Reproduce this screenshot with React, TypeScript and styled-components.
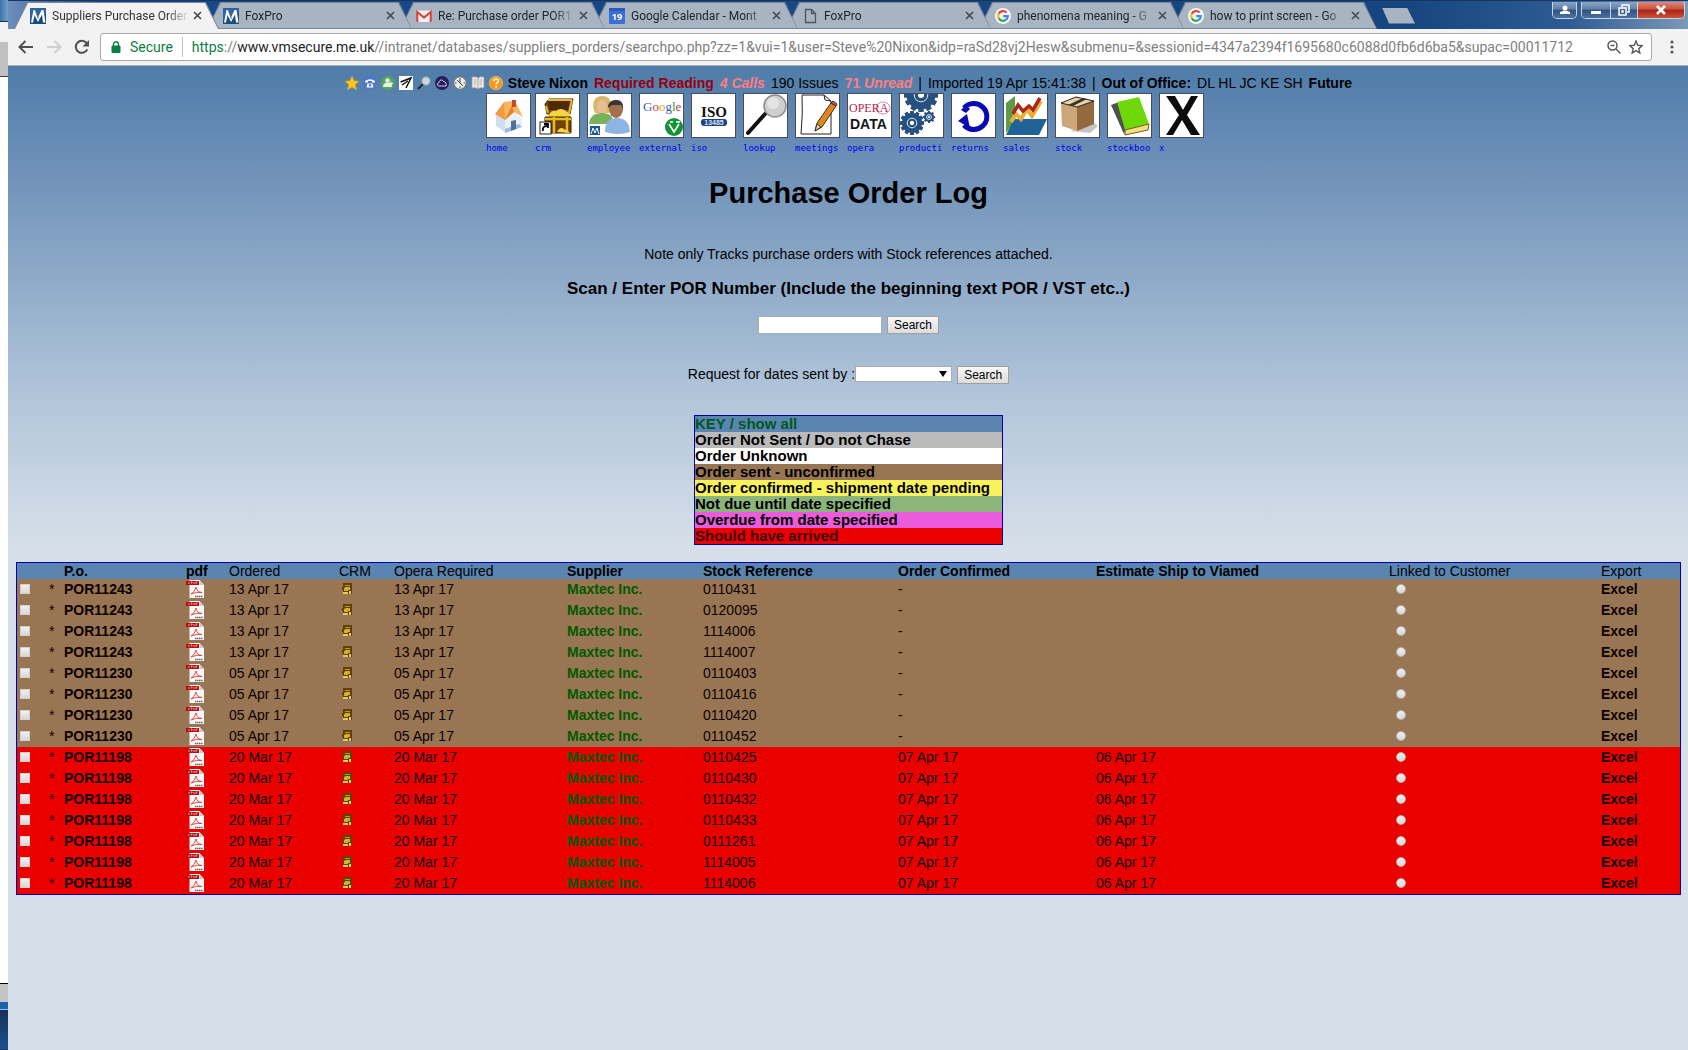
import React from 'react';
import styled, { createGlobalStyle, css } from 'styled-components';

const GlobalStyle = createGlobalStyle`
  *, *::before, *::after { box-sizing: border-box; }
  body {
    margin: 0;
    background: #d6dfe9;
    font-family: "Liberation Sans", Arial, sans-serif;
    font-size: 14px;
    color: #000;
  }
  a { color: inherit; text-decoration: none; }
  svg { display: block; }
`;

const uiFont = css`font-family: Roboto, "Noto Sans", sans-serif;`;

/* ---------- desktop and window frame ---------- */

const Desktop = styled.div`
  display: grid;
  grid-template-columns: 8px minmax(0, 1fr);
  min-height: 100vh;
`;

const Behind = styled.div`
  display: flex;
  flex-direction: column;
  background: #fff;
`;

const Strip = styled.div<{ $h: number; $bg: string; $line?: string }>`
  height: ${(p) => p.$h}px;
  background: ${(p) => p.$bg};
  border-bottom: 1px solid ${(p) => p.$line ?? 'transparent'};
`;

const Grow = styled.div`flex: 1;`;

const Browser = styled.div`
  display: flex;
  flex-direction: column;
  min-width: 0;
`;

/* ---------- tab strip ---------- */

const TabStrip = styled.div`
  display: flex;
  height: 29px;
  padding: 1px 3px 0 6px;
  background: linear-gradient(90deg, #6d8dbd 0, #17498a 90px, #17457f 1400px, #2d5b92 1560px, #7c98b8 100%);
  border-top: 1px solid #16355f;
`;

const Tabs = styled.div`
  display: flex;
  flex: 0 1 1364px;
  min-width: 0;
  isolation: isolate;
`;

const Tab = styled.div<{ $active?: boolean; $z: number }>`
  ${uiFont}
  position: relative;
  z-index: ${(p) => p.$z};
  display: flex;
  align-items: center;
  gap: 6px;
  flex: 0 1 205px;
  min-width: 0;
  height: 27px;
  padding: 0 15px 0 16px;
  font-size: 12px;
  color: ${(p) => (p.$active ? '#333' : '#20242b')};
  background: #7b8796;
  clip-path: polygon(13px 0, calc(100% - 13px) 0, 100% 100%, 0 100%);
  & + & { margin-left: -12px; }
  &::before {
    content: '';
    position: absolute;
    z-index: -1;
    inset: ${(p) => (p.$active ? '1px 1px 0' : '1px')};
    background: ${(p) => (p.$active ? '#f2f2f2' : '#a9b4c3')};
    clip-path: polygon(13px 0, calc(100% - 13px) 0, 100% 100%, 0 100%);
  }
`;

const TabTitle = styled.span`
  flex: 1;
  min-width: 0;
  margin-right: -5px;
  overflow: hidden;
  white-space: nowrap;
  line-height: 18px;
  mask-image: linear-gradient(90deg, #000 calc(100% - 22px), transparent);
`;

const PlainButton = styled.button`
  display: flex;
  align-items: center;
  justify-content: center;
  flex: none;
  padding: 0;
  border: 0;
  background: none;
  color: inherit;
`;

const TabClose = styled(PlainButton)`
  width: 14px;
  height: 14px;
  color: #454b54;
`;

const NewTab = styled(PlainButton)`
  align-self: center;
  width: 33px;
  height: 16px;
  margin-left: 4px;
  background: #a9b4c3;
  clip-path: polygon(0 0, 25px 0, 100% 100%, 7px 100%);
`;

const WindowControls = styled.div`
  display: flex;
  align-items: flex-start;
  gap: 4px;
  margin-left: auto;
`;

const ControlGroup = styled.div`
  display: flex;
  height: 17px;
  overflow: hidden;
  border: 1px solid #c5d3e4;
  border-top: 0;
  border-radius: 0 0 5px 5px;
`;

const ControlButton = styled(PlainButton)<{ $w: number; $close?: boolean }>`
  width: ${(p) => p.$w}px;
  height: 16px;
  background: ${(p) =>
    p.$close
      ? 'linear-gradient(#d98b7c, #c8503c 45%, #ab2311 50%, #c8523a)'
      : 'linear-gradient(#8da5c4, #5f7fa8 45%, #30527f 50%, #4d719c)'};
  & + & { border-left: 1px solid #c5d3e4; }
`;

/* ---------- toolbar ---------- */

const Toolbar = styled.div`
  ${uiFont}
  display: flex;
  align-items: center;
  height: 37px;
  padding: 0 8px;
  background: #f2f2f2;
  border-bottom: 1px solid #a9b0b8;
`;

const NavButton = styled(PlainButton)<{ $dim?: boolean }>`
  width: 20px;
  height: 20px;
  margin-right: 8px;
  color: ${(p) => (p.$dim ? '#cfcfcf' : '#505050')};
`;

const AddressBar = styled.div`
  display: flex;
  align-items: center;
  flex: 1;
  min-width: 0;
  height: 28px;
  padding: 0 7px 0 10px;
  background: #fff;
  border: 1px solid #a8a8a8;
  border-radius: 3px;
  font-size: 14px;
  line-height: 20px;
`;

const Secure = styled.span`
  margin-left: 9px;
  padding-right: 9px;
  color: #0b8043;
  border-right: 1px solid #c0c0c0;
`;

const Url = styled.div`
  flex: 1;
  min-width: 0;
  margin-left: 9px;
  overflow: hidden;
  white-space: nowrap;
  color: #808080;
  b { font-weight: 400; color: #222; }
  i { font-style: normal; color: #0b8043; }
`;

const BarButton = styled(PlainButton)`
  width: 16px;
  height: 20px;
  margin-left: 6px;
  color: #5a5a5a;
`;

const MoreButton = styled(BarButton)`margin-left: 12px;`;

/* ---------- page ---------- */

const Page = styled.main`
  display: flex;
  flex-direction: column;
  align-items: center;
  flex: 1;
  padding: 8px 7px 24px 8px;
  background: #d6dfe9 linear-gradient(#4f7ca9 0, #6c8fb7 94px, #b0c4d9 325px, #d6dfe9 480px) no-repeat;
`;

const StatusBar = styled.div`
  display: flex;
  align-items: center;
  gap: 4px;
  font-size: 14px;
  line-height: 18px;
  white-space: nowrap;
`;

const Quick = styled.a`
  display: block;
  width: 14px;
  height: 14px;
`;

const StatusText = styled.div`
  display: flex;
  gap: 6px;
  margin-left: 1px;
`;
const Required = styled.a`font-weight: 700; color: #96000e;`;
const Alert = styled.a`font-weight: 700; color: #ff7d80;`;

const Menu = styled.nav`
  display: flex;
  margin-top: 1px;
`;

const MenuItem = styled.a<{ $w: number }>`
  display: flex;
  flex-direction: column;
  width: ${(p) => p.$w}px;
  font-family: "DejaVu Sans Mono", "Liberation Mono", monospace;
  font-size: 9px;
  line-height: 12px;
  color: #0000f0;
`;

const MenuPicture = styled.span`
  display: block;
  width: 45px;
  height: 45px;
  margin-bottom: 4px;
  background: #fff;
  border: 1px solid #4c4c58;
`;

const Title = styled.h1`
  margin: 22px 0 35px;
  font-size: 29px;
  line-height: 34px;
`;

const Note = styled.p`
  margin: 0;
  line-height: 18px;
`;

const Prompt = styled.label`
  margin: 16px 0 17px;
  font-size: 17px;
  font-weight: 700;
  line-height: 20px;
`;

const SearchForm = styled.form<{ $gap: number }>`
  display: flex;
  align-items: flex-start;
  line-height: 16px;
  margin: 0 0 ${(p) => p.$gap}px;
`;

const TextBox = styled.input`
  width: 124px;
  height: 18px;
  padding: 0 2px;
  background: #fff;
  border: 1px solid #a5adb5;
`;

const SearchButton = styled.button`
  height: 18px;
  margin-left: 5px;
  padding: 0 6px;
  font-family: inherit;
  font-size: 12px;
  line-height: 16px;
  color: #000;
  background: linear-gradient(#f8f8f8, #dcdcdc);
  border: 1px solid #a0a0a0;
`;

const SelectBox = styled.span`
  position: relative;
  display: block;
  width: 97px;
  height: 16px;
  &::after {
    content: '';
    position: absolute;
    top: 5px;
    right: 5px;
    border: solid transparent;
    border-width: 6px 4px 0;
    border-top-color: #000;
    pointer-events: none;
  }
`;

const Select = styled.select`
  display: block;
  width: 100%;
  height: 100%;
  appearance: none;
  background: #fff;
  border: 1px solid #a5adb5;
`;

const Key = styled.ul`
  width: 309px;
  margin: 0 0 17px;
  padding: 0;
  list-style: none;
  border: 1px solid #0000a8;
`;

const KeyRow = styled.li<{ $bg: string; $fg?: string }>`
  font-size: 15px;
  font-weight: 700;
  line-height: 16px;
  color: ${(p) => p.$fg ?? '#000'};
  background: ${(p) => p.$bg};
`;

const Orders = styled.table`
  width: 100%;
  table-layout: fixed;
  border-collapse: separate;
  border-spacing: 0;
  border: 1px solid #0000a8;
`;

const Head = styled.th<{ $bold?: boolean }>`
  height: 16px;
  padding: 0;
  text-align: left;
  font-weight: ${(p) => (p.$bold ? 700 : 400)};
  line-height: 16px;
  white-space: nowrap;
  background: #5a85b0;
`;

const Row = styled.tr<{ $late: boolean }>`
  background: ${(p) => (p.$late ? '#eb0000' : '#997653')};
`;

const Cell = styled.td<{ $bold?: boolean; $green?: boolean }>`
  height: 21px;
  padding: 0 0 2px;
  line-height: 18px;
  white-space: nowrap;
  font-weight: ${(p) => (p.$bold ? 700 : 400)};
  color: ${(p) => (p.$green ? '#005a00' : '#0d0000')};
`;

const Tick = styled.input`
  display: block;
  appearance: none;
  width: 10px;
  height: 10px;
  margin: 0 3px;
  background: linear-gradient(#f0f0f0, #d8d8d8);
  border: 1px solid #d4cfc8;
`;

const Dot = styled(Tick)`
  margin: 0 7px;
  border-radius: 50%;
  border-color: #b9b3ac;
`;

const Indent = styled.span`
  display: block;
  padding-left: 3px;
`;

/* ---------- drawings ---------- */

const Cross = () => (
  <svg width="9" height="9" viewBox="0 0 9 9" stroke="currentColor" strokeWidth="1.7"><path d="M1 1l7 7M8 1L1 8" /></svg>
);

const ViamedIcon = () => (
  <svg width="16" height="16" viewBox="0 0 16 16">
    <rect width="16" height="16" fill="#1c4b82" />
    <path d="M0 0h16v5L0 12z" fill="#2d639f" />
    <path d="M1 14.500h2L4.500 7 8 14l4-7.500 1 8h2.500L13.500 2h-2L8 9.500 5.500 2h-2z" fill="#fff" />
    <path d="M5 2l3.500 9" stroke="#1c4b82" strokeWidth=".7" />
  </svg>
);

const GmailIcon = () => (
  <svg width="16" height="16" viewBox="0 0 16 16">
    <rect y="2.500" width="16" height="11.500" rx="1" fill="#eee" />
    <path d="M1.200 14V4L8 9.500 14.800 4v10" fill="none" stroke="#d04a42" strokeWidth="2.200" />
  </svg>
);

const CalendarIcon = () => (
  <svg width="16" height="16" viewBox="0 0 16 16">
    <rect width="16" height="16" rx="1" fill="#3b6fd4" />
    <rect width="16" height="3" fill="#2f5bb5" />
    <text x="8" y="12" textAnchor="middle" fontSize="9" fontWeight="700" fontFamily="Open Sans, sans-serif" fill="#fff">19</text>
  </svg>
);

const FileIcon = () => (
  <svg width="16" height="16" viewBox="0 0 16 16" fill="none" stroke="#50555c" strokeWidth="1.300">
    <path d="M3.500 1.500h6l4 4v9h-10zM9.500 1.500v4h4" />
  </svg>
);

const GoogleIcon = () => (
  <svg width="16" height="16" viewBox="0 0 16 16" fill="none" strokeWidth="2.200">
    <circle cx="8" cy="8" r="8" fill="#f4f6f8" />
    <path d="M11.600 4.600A4.800 4.800 0 0 0 3.700 5.800" stroke="#ea4335" />
    <path d="M3.700 5.800a4.800 4.800 0 0 0 0 4.400" stroke="#fbbc05" />
    <path d="M3.700 10.200a4.800 4.800 0 0 0 7.300 1.500" stroke="#34a853" />
    <path d="M11 11.700A4.800 4.800 0 0 0 12.800 8.200H8.200" stroke="#4285f4" />
  </svg>
);

const ArrowIcon = ({ flip }: { flip?: boolean }) => (
  <svg width="16" height="16" viewBox="0 0 16 16" fill="none" stroke="currentColor" strokeWidth="2">
    <path d={flip ? 'M1 8h13M8.500 2l6 6-6 6' : 'M15 8H2M7.500 2l-6 6 6 6'} />
  </svg>
);

const ReloadIcon = () => (
  <svg width="16" height="16" viewBox="0 0 16 16">
    <path d="M13.300 10.300A6 6 0 1 1 12.500 4" fill="none" stroke="currentColor" strokeWidth="2" />
    <path d="M15 1v6.500H8.500z" fill="currentColor" />
  </svg>
);

const LockIcon = () => (
  <svg width="10" height="12" viewBox="0 0 10 12">
    <rect x="0.500" y="4.500" width="9" height="7.500" rx="1" fill="#0b8043" />
    <path d="M2.500 5V3.200a2.500 2.500 0 0 1 5 0V5" fill="none" stroke="#0b8043" strokeWidth="1.400" />
  </svg>
);

const quickIcons: [string, React.ReactNode][] = [
  ['Favourites', <path key="i" d="M7 0l2 4.800 5 .4-3.800 3.400L11.500 14 7 11 2.500 14l1.300-5.400L0 5.200l5-.4z" fill="#ffc61e" stroke="#e89a10" strokeWidth=".5" />],
  ['Phone', <g key="i"><circle cx="7" cy="7" r="7" fill="#4f74cf" /><path d="M2 6.500V5Q7 1.500 12 5v1.500H9V5H5v1.500zM3.500 11.500l1-4h5l1 4z" fill="#fff" /><circle cx="7" cy="9.300" r="1.200" fill="#4f74cf" /></g>],
  ['Contacts', <g key="i"><circle cx="7" cy="7" r="7" fill="#57a55c" /><circle cx="6.500" cy="4.500" r="2.200" fill="#e6f3e4" /><path d="M2 11q0-4.500 4.500-4.500T11 11z" fill="#e6f3e4" /><path d="M10 5.500v4M8 7.500h4" stroke="#fff" /></g>],
  ['Pen', <g key="i"><rect width="14" height="14" fill="#fff" /><path d="M1.500 6L12 2 7 12M3 9l6-4" fill="none" stroke="#111" strokeWidth="1.500" /></g>],
  ['Find', <g key="i"><path d="M1 13l5-5" stroke="#222" strokeWidth="1.800" /><circle cx="9" cy="5" r="4.200" fill="#c9d8dc" stroke="#8b9ba0" /></g>],
  ['Cloud', <g key="i"><circle cx="7" cy="7" r="7" fill="#241e5c" /><path d="M3.500 10q-2-1-.5-3 1 0 1-1 2-4 4.500-.5Q12 6 11 10z" fill="none" stroke="#d3d2ea" /></g>],
  ['Clock', <g key="i"><circle cx="7" cy="7" r="6.300" fill="#eee" stroke="#777" strokeWidth="1.300" /><path d="M7 2v5l3 3M2 7h1.500M10.500 7H12M7 12v-1.500M7 7L4 4" fill="none" stroke="#444" /></g>],
  ['Book', <g key="i"><path d="M1 1q4-1 6 1 2-2 6-1v11q-4-1-6 1-2-2-6-1z" fill="#e9e9e4" stroke="#999" strokeWidth=".7" /><path d="M7 2v11M3 4h2.500M3 6h2.500M3 8h2.500M8.500 4H11M8.500 6H11M8.500 8H11" stroke="#999" strokeWidth=".7" /></g>],
  ['Help', <g key="i"><circle cx="7" cy="7" r="6.700" fill="#f7981d" stroke="#ffc467" strokeWidth=".7" /><path d="M4.800 5.200q.2-2.200 2.300-2.200t2.200 2q0 1.200-1.300 1.900-.9.600-.9 1.700M7.100 10v1.700" fill="none" stroke="#fff" strokeWidth="1.500" /></g>],
];

const Gear = ({ x, y, r, teeth }: { x: number; y: number; r: number; teeth: number }) => (
  <g transform={`translate(${x} ${y})`}>
    {Array.from({ length: teeth }, (_, i) => (
      <rect key={i} x={-r / 7} y={-r} width={r / 3.5} height={r * 2} fill="#26507f" transform={`rotate(${(i * 360) / teeth})`} />
    ))}
    <circle r={r * 0.85} fill="#26507f" />
    <circle r={r * 0.4} fill="none" stroke="#dbe6f0" strokeWidth="1" />
    <circle r={r * 0.18} fill="#fff" />
  </g>
);

const menuItems: [string, React.ReactNode][] = [
  ['home', <g key="i"><path d="M9 20l9 6v12L9 32z" fill="#cfdff0" /><path d="M18 25l8-7 9 6v9l-17 6z" fill="#eaf1fa" /><path d="M18 39l17-6-3-3-14 5z" fill="#9cbbe3" /><path d="M8 20L17 8l11-1-10 19z" fill="#f29a3e" /><path d="M17 8l11-1 8 16-9-5-9 8z" fill="#f8b566" /><path d="M27 18l-9 8 7-15z" fill="#e88425" /><rect x="25" y="6" width="4" height="7" fill="#c8452e" /><path d="M24 27l5-1v9l-5 2z" fill="#4f7099" /></g>],
  ['crm', <g key="i"><path d="M9 10l4-5h24l-3 15H11z" fill="#7a4a10" stroke="#3a2205" /><path d="M12 7h22l-2 9H13z" fill="#4c2c08" /><path d="M10 12l2 7M36 6l-3 13M12 6h24" stroke="#e7bb2c" strokeWidth="2" /><path d="M12 22q3-6 8-5 5-5 14 3v6H12z" fill="#f6d442" /><path d="M9 23h26v16H9z" fill="#6d430c" stroke="#3a2205" /><path d="M9 25h26M18 23v16M31 23v16" stroke="#e9bb23" strokeWidth="2.500" /><path d="M21 38q3-6 7-3l7 4z" fill="#f6d442" /><rect x="4" y="28" width="11" height="12" fill="#fff" stroke="#222" /><path d="M7 37q-1-5 4-5M8 30h4v4" fill="none" stroke="#000" strokeWidth="1.800" /></g>],
  ['employee', <g key="i"><path d="M5 13Q5 2 14 2t9 9l-2 8H7z" fill="#d8b76b" /><ellipse cx="14" cy="13" rx="5" ry="7" fill="#e9bd93" /><path d="M1 30q1-11 13-11t11 11z" fill="#7bb15a" /><ellipse cx="28" cy="15" rx="7" ry="9" fill="#a2704d" /><path d="M20 14q0-8 8-8t7 9l-2-4h-9z" fill="#3c3534" /><path d="M17 38q0-14 12-14 12 0 13 14-12 4-25 0z" fill="#8db4e2" /><rect x="2" y="32" width="10" height="9" fill="#1d5a94" /><path d="M3 40l2-6 2 5 2-5 2 6" fill="none" stroke="#fff" /></g>],
  ['external', <g key="i"><text x="3" y="17" fontFamily="Liberation Serif, serif" fontSize="13" fill="#3a62b8">G<tspan fill="#cc3b35">o</tspan><tspan fill="#dca51e">o</tspan><tspan>g</tspan><tspan fill="#3c9a48">l</tspan><tspan fill="#cc3b35">e</tspan></text><circle cx="34" cy="33" r="9" fill="#149239" /><path d="M29 30l5 8 5-8M30 28h3M36 28h4" fill="none" stroke="#fff" strokeWidth="1.600" /></g>],
  ['iso', <g key="i"><text x="22" y="23" textAnchor="middle" fontFamily="Liberation Serif, serif" fontSize="15" fontWeight="700" fill="#111">ISO</text><rect x="9" y="25" width="26" height="7" rx="3" fill="#1f4580" /><text x="22" y="31" textAnchor="middle" fontFamily="Liberation Sans, sans-serif" fontSize="7" fontWeight="700" fill="#d7e3f4">13485</text></g>],
  ['lookup', <g key="i"><path d="M4 39l17-19" stroke="#111" strokeWidth="4" strokeLinecap="round" /><circle cx="31" cy="12" r="11" fill="#cfcfcf" stroke="#8e8e8e" strokeWidth="1.500" /><circle cx="29" cy="9" r="6" fill="#e4e4e4" /></g>],
  ['meetings', <g key="i"><path d="M6 1h22l7 6v33H5q2-20 1-39z" fill="#fff" stroke="#222" /><path d="M28 1l1 5 6 1" fill="none" stroke="#222" /><path d="M19 37l2-8L35 9l5 3-14 21z" fill="#dd8626" stroke="#4a2a10" /><path d="M35 9l2-2 4 3-1 2z" fill="#c94b76" stroke="#4a2a10" /><path d="M19 37l2-7 4 3z" fill="#f4d4a1" stroke="#333" /></g>],
  ['opera', <g key="i"><ellipse cx="35" cy="14" rx="7" ry="6" fill="none" stroke="#d88ba0" /><text x="1" y="18" fontFamily="Liberation Serif, serif" fontSize="12" fill="#b8234a">OPERA</text><text x="2" y="35" fontFamily="Liberation Sans, sans-serif" fontSize="14" fontWeight="700" fill="#151515">DATA</text></g>],
  ['producti', <g key="i"><Gear x={21} y={1} r={17} teeth={12} /><Gear x={12} y={29} r={12} teeth={12} /><Gear x={29} y={23} r={6} teeth={8} /></g>],
  ['returns', <g key="i"><path d="M12 14A13 13 0 1 1 12 31" fill="none" stroke="#0808b4" strokeWidth="5" /><path d="M6 27l9-7 3 14z" fill="#0808b4" /><path d="M9 16l5-5 4 4-4 4z" fill="#0808b4" /></g>],
  ['sales', <g key="i"><path d="M2 9l9-7v25L2 39z" fill="#5d9b4b" /><path d="M10 25h33l-8 16H2z" fill="#1f6298" /><path d="M7 28l5-8 5 5 6-10 5 7 9-15" fill="none" stroke="#e7b036" strokeWidth="4" /><path d="M9 20l5-9 5 6 6-5 4 4 7-12" fill="none" stroke="#ad2818" strokeWidth="3.500" /></g>],
  ['stock', <g key="i"><path d="M14 37l20 2 8-7-5-4z" fill="#c5c5c5" /><path d="M5 9l16 4v24L6 32z" fill="#cda77a" /><path d="M21 13l17-6v23l-17 7z" fill="#94693e" /><path d="M5 9l15-6 18 4-17 6z" fill="#ead0a6" stroke="#222" /><path d="M12 11l15-7 4 1-14 7z" fill="#3b342c" /></g>],
  ['stockboo', <g key="i"><path d="M3 11l8-3 7 26-2 6z" fill="#505050" /><path d="M9 8l22-5 10 27-24 6z" fill="#6fd80a" /><path d="M17 36l24-6-1 6-23 5z" fill="#f5df83" stroke="#6b5f1a" /></g>],
  ['x', <path key="i" d="M6 2h9l8 14 8-14h7L27 21l13 20h-9l-9-15-9 15H6l13-20z" fill="#0b0b0b" />],
];

const PdfIcon = () => (
  <svg width="18" height="18" viewBox="0 0 18 18">
    <path d="M3.500 0h10l4.500 5v13H3.500z" fill="#f7f7f7" />
    <path d="M13.500 0l4.500 5h-4.500z" fill="#c9c9c9" />
    <rect y="1" width="13" height="4" fill="#b80d12" />
    <path d="M3 2v2M5 2h1v1H5M8 2v2M10 4V2h1.500" fill="none" stroke="#f6c7c7" strokeWidth=".8" />
    <path d="M5 14q4-2 5-7 .5 5 6 5.500-6-1-11 1.500z" fill="none" stroke="#d8423c" strokeWidth=".9" />
    <path d="M9 16.500h8" stroke="#666" strokeWidth="1.500" strokeDasharray="1.500 .5" />
  </svg>
);

const CrmIcon = () => (
  <svg width="10" height="12" viewBox="0 0 10 12">
    <path d="M1 0h9v11H1V7H0V4h1z" fill="#5f4106" />
    <path d="M3 2h5v1H3z" fill="#c09622" />
    <path d="M2 5l2-1h4v3H6v1H2z" fill="#d8ae2d" />
    <path d="M1 9h5v2H1zM7 8h2v3H7z" fill="#e9c860" />
  </svg>
);

/* ---------- data ---------- */

const tabs: { title: string; icon: React.ReactNode }[] = [
  { title: 'Suppliers Purchase Order', icon: <ViamedIcon /> },
  { title: 'FoxPro', icon: <ViamedIcon /> },
  { title: 'Re: Purchase order POR1', icon: <GmailIcon /> },
  { title: 'Google Calendar - Mont', icon: <CalendarIcon /> },
  { title: 'FoxPro', icon: <FileIcon /> },
  { title: 'phenomena meaning - G', icon: <GoogleIcon /> },
  { title: 'how to print screen - Go', icon: <GoogleIcon /> },
];

const keyRows: [string, string, string?][] = [
  ['KEY / show all', '#5a85b0', '#00591f'],
  ['Order Not Sent / Do not Chase', '#bababa'],
  ['Order Unknown', '#ffffff'],
  ['Order sent - unconfirmed', '#997653'],
  ['Order confirmed - shipment date pending', '#f8f35c'],
  ['Not due until date specified', '#8cb57c'],
  ['Overdue from date specified', '#ea5cdb'],
  ['Should have arrived', '#eb0000', '#3a0000'],
];

const columns: [string, number, boolean?][] = [
  ['', 32], ['', 15], ['P.o.', 122, true], ['pdf', 43, true], ['Ordered', 110], ['CRM', 55],
  ['Opera Required', 173], ['Supplier', 136, true], ['Stock Reference', 195, true],
  ['Order Confirmed', 198, true], ['Estimate Ship to Viamed', 293, true],
  ['Linked to Customer', 212], ['Export', 79],
];

const orders = [
  { po: 'POR11243', date: '13 Apr 17', late: false, refs: ['0110431', '0120095', '1114006', '1114007'] },
  { po: 'POR11230', date: '05 Apr 17', late: false, refs: ['0110403', '0110416', '0110420', '0110452'] },
  { po: 'POR11198', date: '20 Mar 17', late: true, refs: ['0110425', '0110430', '0110432', '0110433', '0111261', '1114005', '1114006'] },
].flatMap(({ refs, ...order }) => refs.map((ref) => ({ ...order, ref })));

/* ---------- sections ---------- */

const Chrome = () => (
  <>
    <TabStrip>
      <Tabs>
        {tabs.map((tab, i) => (
          <Tab key={i} $active={i === 0} $z={tabs.length - i}>
            {tab.icon}
            <TabTitle>{tab.title}</TabTitle>
            <TabClose aria-label="Close tab"><Cross /></TabClose>
          </Tab>
        ))}
      </Tabs>
      <NewTab aria-label="New tab" />
      <WindowControls>
        <ControlGroup>
          <ControlButton $w={23} aria-label="Profile">
            <svg width="10" height="10" viewBox="0 0 10 10" fill="#fff"><circle cx="5" cy="3" r="2.500" /><path d="M0 9V7q5-3 10 0v2z" /></svg>
          </ControlButton>
        </ControlGroup>
        <ControlGroup>
          <ControlButton $w={28} aria-label="Minimise">
            <svg width="12" height="10" viewBox="0 0 12 10"><rect x="1" y="6" width="10" height="3" fill="#fff" /></svg>
          </ControlButton>
          <ControlButton $w={27} aria-label="Restore">
            <svg width="12" height="12" viewBox="0 0 12 12" fill="none" stroke="#fff" strokeWidth="1.500"><path d="M4 3V1h7v7H9M1 4h7v7H1zM4 7h1v1H4z" /></svg>
          </ControlButton>
          <ControlButton $w={47} $close aria-label="Close">
            <svg width="12" height="10" viewBox="0 0 12 10" stroke="#fff" strokeWidth="2.600"><path d="M2 1l8 8M10 1L2 9" /></svg>
          </ControlButton>
        </ControlGroup>
      </WindowControls>
    </TabStrip>
    <Toolbar>
      <NavButton aria-label="Back"><ArrowIcon /></NavButton>
      <NavButton aria-label="Forward" $dim><ArrowIcon flip /></NavButton>
      <NavButton aria-label="Reload"><ReloadIcon /></NavButton>
      <AddressBar>
        <LockIcon />
        <Secure>Secure</Secure>
        <Url>
          <i>https</i>://<b>www.vmsecure.me.uk</b>//intranet/databases/suppliers_porders/searchpo.php?zz=1&amp;vui=1&amp;user=Steve%20Nixon&amp;idp=raSd28vj2Hesw&amp;submenu=&amp;sessionid=4347a2394f1695680c6088d0fb6d6ba5&amp;supac=00011712
        </Url>
        <BarButton aria-label="Zoom">
          <svg width="14" height="14" viewBox="0 0 14 14" fill="none" stroke="currentColor" strokeWidth="1.500"><circle cx="5.500" cy="5.500" r="4.500" /><path d="M3.500 5.500h4M9 9l4.500 4.500" /></svg>
        </BarButton>
        <BarButton aria-label="Bookmark">
          <svg width="14" height="14" viewBox="0 0 14 14" fill="none" stroke="currentColor" strokeWidth="1.400"><path d="M7 1l1.700 4.300 4.600.3-3.500 3 1.100 4.500L7 10.600l-3.900 2.500 1.100-4.500-3.500-3 4.600-.3z" /></svg>
        </BarButton>
      </AddressBar>
      <MoreButton aria-label="Menu">
        <svg width="4" height="14" viewBox="0 0 4 14" fill="currentColor"><circle cx="2" cy="2" r="1.600" /><circle cx="2" cy="7" r="1.600" /><circle cx="2" cy="12" r="1.600" /></svg>
      </MoreButton>
    </Toolbar>
  </>
);

const OrderTable = () => (
  <Orders>
    <colgroup>
      {columns.map(([, width], i) => <col key={i} width={width} />)}
    </colgroup>
    <thead>
      <tr>{columns.map(([name, , bold], i) => <Head key={i} $bold={bold}>{name}</Head>)}</tr>
    </thead>
    <tbody>
      {orders.map((o, i) => (
        <Row key={i} $late={o.late}>
          <Cell><Tick type="checkbox" aria-label={`Select ${o.po} ${o.ref}`} /></Cell>
          <Cell>*</Cell>
          <Cell $bold><a href="#po">{o.po}</a></Cell>
          <Cell><a href="#pdf" aria-label="Open PDF"><PdfIcon /></a></Cell>
          <Cell>{o.date}</Cell>
          <Cell><a href="#crm" aria-label="Open CRM"><Indent><CrmIcon /></Indent></a></Cell>
          <Cell>{o.date}</Cell>
          <Cell $bold $green><a href="#supplier">Maxtec Inc.</a></Cell>
          <Cell>{o.ref}</Cell>
          <Cell>{o.late ? '07 Apr 17' : '-'}</Cell>
          <Cell>{o.late ? '06 Apr 17' : ''}</Cell>
          <Cell><Dot type="radio" name="linked" aria-label={`Link ${o.po} ${o.ref}`} /></Cell>
          <Cell $bold><a href="#excel">Excel</a></Cell>
        </Row>
      ))}
    </tbody>
  </Orders>
);

export default function App() {
  return (
    <>
      <GlobalStyle />
      <Desktop>
        <Behind>
          <Strip $h={22} $bg="linear-gradient(90deg, #3d75a8, #6fa0c8)" $line="#12325a" />
          <Strip $h={20} $bg="#f2f2f2" />
          <Strip $h={35} $bg="#c0c0c0" $line="#404040" />
          <Grow />
          <Strip $h={1} $bg="#000" $line="#000" />
          <Strip $h={18} $bg="#c4c4c4" />
          <Strip $h={8} $bg="#1c62ab" $line="#9fbede" />
          <Strip $h={40} $bg="linear-gradient(#14335c, #1c4f8c)" />
        </Behind>
        <Browser>
          <Chrome />
          <Page>
            <StatusBar>
              {quickIcons.map(([name, drawing]) => (
                <Quick key={name} href="#quick" aria-label={name}>
                  <svg width="14" height="14" viewBox="0 0 14 14">{drawing}</svg>
                </Quick>
              ))}
              <StatusText>
                <b>Steve Nixon</b>
                <Required href="#reading">Required Reading</Required>
                <Alert href="#calls"><i>4 Calls</i></Alert>
                <span>190 Issues</span>
                <Alert href="#unread">71 <i>Unread</i></Alert>
                <span>|</span>
                <span>Imported 19 Apr 15:41:38</span>
                <span>|</span>
                <b>Out of Office:</b>
                <span>DL HL JC KE SH</span>
                <b>Future</b>
              </StatusText>
            </StatusBar>
            <Menu>
              {menuItems.map(([name, drawing], i) => (
                <MenuItem key={name} href={`#${name}`} $w={i === 0 ? 49 : 52}>
                  <MenuPicture><svg width="43" height="43" viewBox="0 0 43 43">{drawing}</svg></MenuPicture>
                  {name}
                </MenuItem>
              ))}
            </Menu>
            <Title>Purchase Order Log</Title>
            <Note>Note only Tracks purchase orders with Stock references attached.</Note>
            <Prompt htmlFor="por">Scan / Enter POR Number (Include the beginning text POR / VST etc..)</Prompt>
            <SearchForm $gap={32} onSubmit={(e) => e.preventDefault()}>
              <TextBox id="por" type="text" />
              <SearchButton>Search</SearchButton>
            </SearchForm>
            <SearchForm $gap={31} onSubmit={(e) => e.preventDefault()}>
              <label htmlFor="sender">Request for dates sent by :</label>
              <SelectBox><Select id="sender"><option /></Select></SelectBox>
              <SearchButton>Search</SearchButton>
            </SearchForm>
            <Key>
              {keyRows.map(([name, bg, fg]) => (
                <KeyRow key={name} $bg={bg} $fg={fg}><a href="#key">{name}</a></KeyRow>
              ))}
            </Key>
            <OrderTable />
          </Page>
        </Browser>
      </Desktop>
    </>
  );
}
